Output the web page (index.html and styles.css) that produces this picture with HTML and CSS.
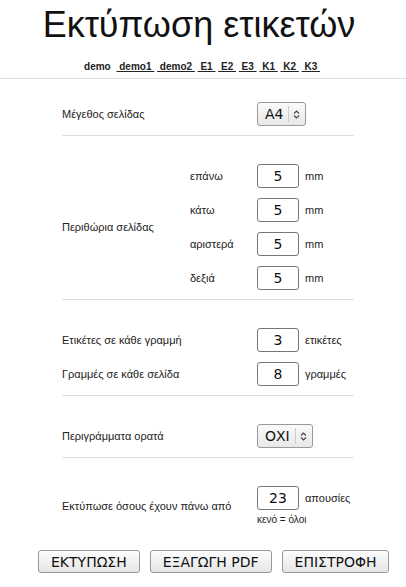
FILE: index.html
```html
<!DOCTYPE html>
<html lang="el">
<head>
<meta charset="utf-8">
<title>Εκτύπωση ετικετών</title>
<link rel="stylesheet" href="styles.css">
</head>
<body>
<h1 class="title">Εκτύπωση ετικετών</h1>
<nav class="demos"><b>demo</b> <a href="#">&nbsp;demo1&nbsp;</a> <a href="#">&nbsp;demo2&nbsp;</a> <a href="#">&nbsp;E1&nbsp;</a> <a href="#">&nbsp;E2&nbsp;</a> <a href="#">&nbsp;E3&nbsp;</a> <a href="#">&nbsp;K1&nbsp;</a> <a href="#">&nbsp;K2&nbsp;</a> <a href="#">&nbsp;K3&nbsp;</a></nav>

<div class="form">
  <section class="group first">
    <div class="label wide">Μέγεθος σελίδας</div>
    <div class="ctrl"><span class="select"><span class="sval">A4</span><span class="sarrow"><svg width="7" height="9" viewBox="0 0 7 9"><path d="M1 3.5 L3.5 1 L6 3.5 M1 5.5 L3.5 8 L6 5.5" fill="none" stroke="#444" stroke-width="1.1"/></svg></span></span></div>
  </section>

  <section class="group margins">
    <div class="label tall">Περιθώρια σελίδας</div>
    <div class="sub">επάνω</div>
    <div class="ctrl"><span class="num">5</span><span class="unit">mm</span></div>
    <div class="sub">κάτω</div>
    <div class="ctrl"><span class="num">5</span><span class="unit">mm</span></div>
    <div class="sub">αριστερά</div>
    <div class="ctrl"><span class="num">5</span><span class="unit">mm</span></div>
    <div class="sub">δεξιά</div>
    <div class="ctrl"><span class="num">5</span><span class="unit">mm</span></div>
  </section>

  <section class="group">
    <div class="label wide">Ετικέτες σε κάθε γραμμή</div>
    <div class="ctrl"><span class="num">3</span><span class="unit">ετικέτες</span></div>
    <div class="label wide">Γραμμές σε κάθε σελίδα</div>
    <div class="ctrl"><span class="num">8</span><span class="unit">γραμμές</span></div>
  </section>

  <section class="group">
    <div class="label wide">Περιγράμματα ορατά</div>
    <div class="ctrl"><span class="select"><span class="sval">ΟΧΙ</span><span class="sarrow"><svg width="7" height="9" viewBox="0 0 7 9"><path d="M1 3.5 L3.5 1 L6 3.5 M1 5.5 L3.5 8 L6 5.5" fill="none" stroke="#444" stroke-width="1.1"/></svg></span></span></div>
  </section>

  <section class="group last">
    <div class="label wide">Εκτύπωσε όσους έχουν πάνω από</div>
    <div class="ctrl stack">
      <div class="line"><span class="num">23</span><span class="unit">απουσίες</span></div>
      <div class="hint">κενό = όλοι</div>
    </div>
  </section>
</div>

<div class="buttons">
  <button class="btn">ΕΚΤΥΠΩΣΗ</button>
  <button class="btn">ΕΞΑΓΩΓΗ PDF</button>
  <button class="btn">ΕΠΙΣΤΡΟΦΗ</button>
</div>
</body>
</html>
```

FILE: styles.css
```css
html, body {
  margin: 0;
  padding: 0;
  background: #fff;
  color: #222;
  font-family: "Liberation Sans", Arial, sans-serif;
}

.title {
  margin: 7px 8px 0 0;
  font-size: 36px;
  line-height: 36px;
  font-weight: normal;
  text-align: center;
  color: #111;
}

.demos {
  margin-top: 18px;
  padding-bottom: 5px;
  padding-right: 2px;
  border-bottom: 1px solid #ddd;
  text-align: center;
  font-size: 10px;
  line-height: 12px;
  font-weight: bold;
}

.demos b {
  margin-right: 3px;
}

.demos a {
  color: #222;
  text-decoration: underline;
}

.form {
  width: 292px;
  margin-left: 62px;
}

.group {
  display: grid;
  grid-template-columns: 128px 67px 1fr;
  row-gap: 10px;
  align-items: center;
  padding: 28px 0 9px;
  border-bottom: 1px solid #ddd;
  font-size: 11px;
}

.group.first {
  padding-top: 23px;
}

.group.last {
  border-bottom: none;
  padding-bottom: 0;
}

.label.wide {
  grid-column: 1 / 3;
}

.label.tall {
  grid-column: 1;
  grid-row: 1 / 5;
}

.sub {
  grid-column: 2;
}

.ctrl {
  grid-column: 3;
  display: flex;
  align-items: center;
  height: 24px;
}

.ctrl.stack {
  display: block;
  height: auto;
}

.line {
  display: flex;
  align-items: center;
  height: 24px;
}

.hint {
  margin-top: 4px;
  font-size: 10px;
}

.num {
  box-sizing: border-box;
  width: 42px;
  height: 24px;
  border: 1px solid #777;
  border-radius: 3px;
  font-family: "DejaVu Sans", sans-serif;
  font-size: 14px;
  line-height: 22px;
  text-align: center;
  color: #111;
}

.unit {
  margin-left: 6px;
}

.select {
  box-sizing: border-box;
  display: inline-flex;
  align-items: center;
  height: 24px;
  padding: 0 5px 0 7px;
  border: 1px solid #999;
  border-radius: 3px;
  background: linear-gradient(#fafafa, #e8e8e8);
  font-family: "DejaVu Sans", sans-serif;
  font-size: 14px;
  color: #111;
}

.sarrow {
  display: flex;
  align-items: center;
  margin-left: 5px;
  padding-left: 4px;
  height: 16px;
  border-left: 1px solid #ccc;
}

.buttons {
  display: flex;
  gap: 10px;
  margin-top: 25px;
  padding-left: 38px;
}

.btn {
  box-sizing: border-box;
  height: 23px;
  padding: 0 12px;
  border: 1px solid #999;
  border-radius: 3px;
  background: linear-gradient(#fcfcfc, #e6e6e6);
  font-family: "DejaVu Sans", sans-serif;
  font-size: 14px;
  color: #111;
}
```
